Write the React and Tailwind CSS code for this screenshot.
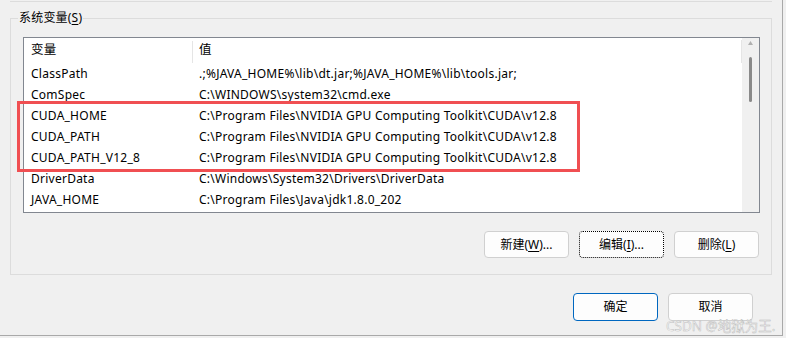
import React from "react";

const rows = [
  ["ClassPath", ".;%JAVA_HOME%\\lib\\dt.jar;%JAVA_HOME%\\lib\\tools.jar;"],
  ["ComSpec", "C:\\WINDOWS\\system32\\cmd.exe"],
  ["CUDA_HOME", "C:\\Program Files\\NVIDIA GPU Computing Toolkit\\CUDA\\v12.8"],
  ["CUDA_PATH", "C:\\Program Files\\NVIDIA GPU Computing Toolkit\\CUDA\\v12.8"],
  ["CUDA_PATH_V12_8", "C:\\Program Files\\NVIDIA GPU Computing Toolkit\\CUDA\\v12.8"],
  ["DriverData", "C:\\Windows\\System32\\Drivers\\DriverData"],
  ["JAVA_HOME", "C:\\Program Files\\Java\\jdk1.8.0_202"],
];

function Btn({ children, variant }) {
  let cls =
    "w-[85px] flex items-center justify-center rounded-[4px] bg-[#fdfdfd] text-[12px] text-black ";
  if (variant === "focus") cls += "border border-dotted border-black";
  else if (variant === "primary") cls += "border-[1.5px] border-[#0067c0]";
  else cls += "border border-[#d0d0d0]";
  return <div className={cls}>{children}</div>;
}

export default function App() {
  return (
    <div
      className="w-[786px] h-[338px] bg-[#f0f0f0] relative overflow-hidden text-black"
      style={{ fontFamily: '"Segoe UI", "Noto Sans", "Noto Sans CJK SC", sans-serif' }}
    >
      <div className="w-[783px] h-[336px] border-r border-b border-[#a9a9a9] flex flex-col">
        <div className="ml-[10px] w-[762px] h-[2px] border-b border-[#dcdcdc]" />
        {/* group box */}
        <div className="mt-[16px] ml-[10px] w-[762px] h-[257px] border border-[#dcdcdc] relative flex flex-col">
          <div className="absolute left-[7px] top-[-10px] px-[1px] bg-[#f0f0f0] text-[12px] leading-[18px] tracking-[0.2px]">
            系统变量(<span className="underline underline-offset-2">S</span>)
          </div>
          {/* list */}
          <div className="mt-[18px] ml-[12px] w-[737px] h-[176px] border border-[#828790] bg-white flex relative">
            <div className="flex-1 flex flex-col tracking-[0.25px]">
              <div className="h-[25px] flex items-center text-[12px] relative">
                <div className="w-[168px] pl-[7px] text-[12.5px]">变量</div>
                <div className="w-px h-[22px] self-end bg-[#e5e5e5]" />
                <div className="flex-1 pl-[6px] text-[12.5px]">值</div>
                <div className="w-px h-[23px] self-end bg-[#e5e5e5]" />
              </div>
              {rows.map(([k, v]) => (
                <div key={k} className="h-[21px] flex items-center text-[12px] whitespace-nowrap">
                  <div className="w-[175px] pl-[7px]">{k}</div>
                  <div>{v}</div>
                </div>
              ))}
            </div>
            <div className="w-[17px] bg-[#f0f0f0] flex flex-col items-center pt-[2px]">
              <svg width="5" height="4" viewBox="0 0 5 4" className="mt-[1px]">
                <path d="M2.5 0 L5 4 L0 4 Z" fill="#b0b0b0" />
              </svg>
              <div className="mt-[12px] w-[3px] h-[45px] rounded-full bg-[#8a8a8a]" />
            </div>
          </div>
          {/* buttons */}
          <div className="mt-[18px] pr-[12px] flex justify-end gap-[10px] h-[27px]">
            <Btn>新建(<span className="underline underline-offset-2">W</span>)...</Btn>
            <Btn variant="focus">编辑(<span className="underline underline-offset-2">I</span>)...</Btn>
            <Btn>删除(<span className="underline underline-offset-2">L</span>)</Btn>
          </div>
        </div>
        <div className="mt-[18px] pr-[29px] flex justify-end gap-[10px] h-[28px]">
          <Btn variant="primary">确定</Btn>
          <Btn>取消</Btn>
        </div>
      </div>
      {/* red highlight box */}
      <div className="absolute left-[17px] top-[101px] w-[563px] h-[71px] border-[3px] border-[#f04f52]" />
      {/* watermark */}
      <div
        className="absolute left-[666px] top-[317px] text-[13.5px] leading-[18px] text-white whitespace-nowrap"
        style={{ WebkitTextStroke: "0.5px #bcbcbc" }}
      >
        CSDN @地狱为王.
      </div>
    </div>
  );
}
